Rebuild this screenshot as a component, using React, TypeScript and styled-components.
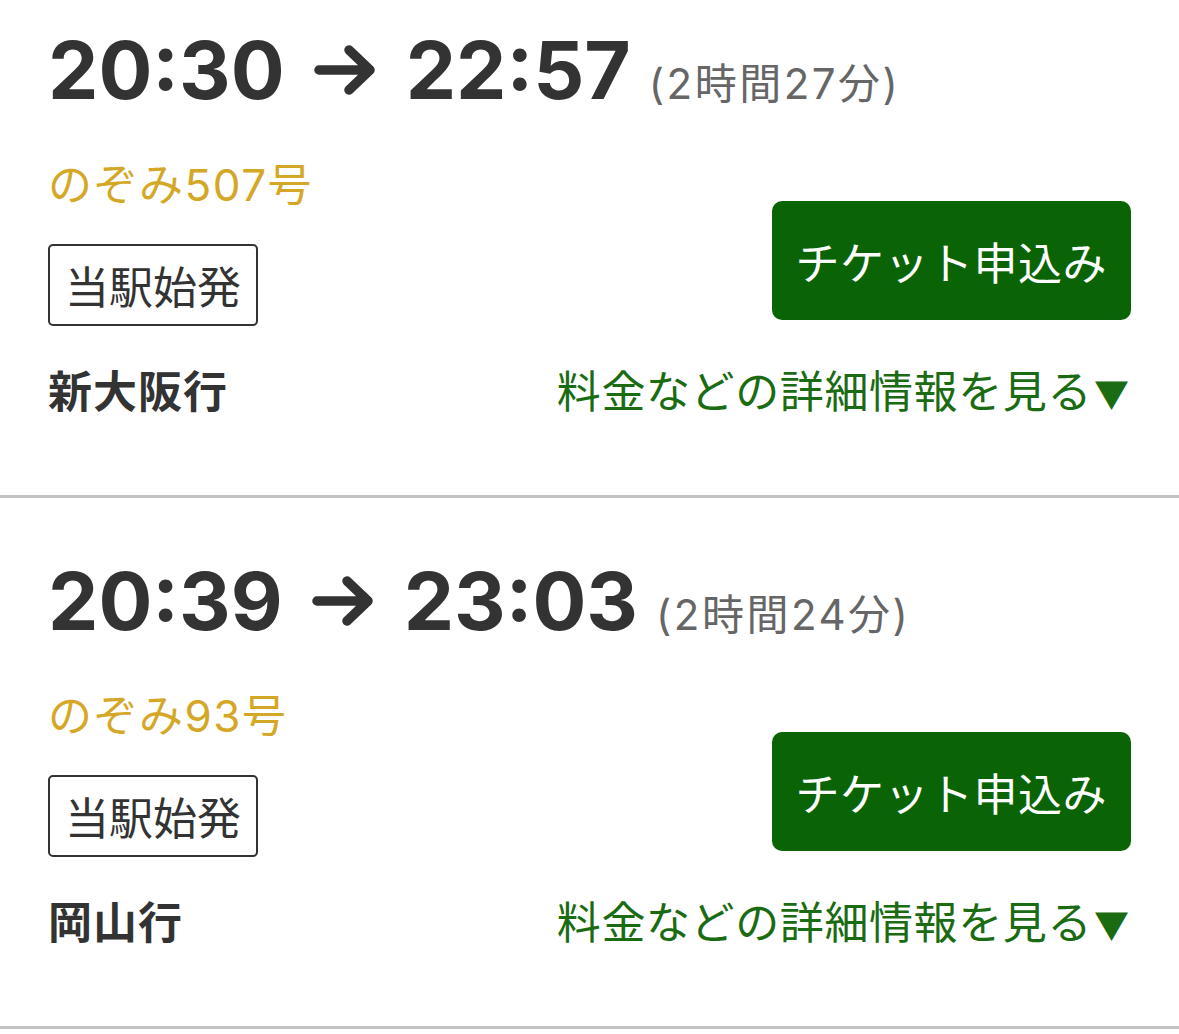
import React from "react";
import styled, { createGlobalStyle } from "styled-components";

const GlobalStyle = createGlobalStyle`
  html, body {
    margin: 0;
    padding: 0;
    background: #ffffff;
  }
  body {
    font-family: "Inter", "Noto Sans CJK JP", sans-serif;
    color: #333333;
  }
`;

const List = styled.div`
  width: 100%;
  margin-top: -33px;
`;

const Card = styled.section`
  padding: 63px 48px 76px;
  border-bottom: 3px solid #c2c2c2;
`;

const TimeRow = styled.div`
  white-space: nowrap;
  line-height: 80px;
  height: 80px;
`;

const Time = styled.span`
  font-family: "Inter", "Liberation Sans", sans-serif;
  font-weight: 700;
  font-size: 80px;
  color: #333333;
`;

const Arrow = styled.svg`
  width: 62px;
  height: 50px;
  margin: 0 30px 0 29px;
  vertical-align: 4px;
`;

const Duration = styled.span`
  font-family: "Inter", "Noto Sans CJK JP", sans-serif;
  font-size: 42px;
  letter-spacing: 2.5px;
  color: #666666;
  margin-left: 18px;
`;

const Body = styled.div`
  display: flex;
  justify-content: space-between;
  align-items: flex-end;
  margin-top: 45px;
`;

const LeftCol = styled.div`
  display: flex;
  flex-direction: column;
  align-items: flex-start;
`;

const TrainName = styled.div`
  font-family: "Inter", "Noto Sans CJK JP", sans-serif;
  font-size: 44px;
  letter-spacing: 1.5px;
  line-height: 60px;
  color: #d4a826;
`;

const Badge = styled.div`
  margin-top: 29px;
  border: 2px solid #333333;
  border-radius: 5px;
  padding: 0 15px;
  height: 78px;
  display: flex;
  align-items: center;
  font-family: "Noto Sans CJK JP", sans-serif;
  font-size: 44px;
  color: #333333;
`;

const TicketButton = styled.button`
  height: 119px;
  padding: 0 24px;
  margin-bottom: 6px;
  border: none;
  border-radius: 10px;
  background: #0a6406;
  color: #ffffff;
  font-family: "Noto Sans CJK JP", sans-serif;
  font-size: 44px;
  letter-spacing: 0.5px;
  cursor: pointer;
`;

const Footer = styled.div`
  display: flex;
  justify-content: space-between;
  align-items: center;
  margin-top: 33px;
  height: 60px;
  line-height: 60px;
`;

const Destination = styled.div`
  font-family: "Noto Sans CJK JP", sans-serif;
  font-weight: 700;
  font-size: 44px;
  letter-spacing: 1px;
  color: #333333;
`;

const DetailLink = styled.a`
  font-family: "Noto Sans CJK JP", sans-serif;
  font-size: 44px;
  letter-spacing: 0.6px;
  color: #1a6b12;
  text-decoration: none;
  margin-right: 2px;
`;

const Caret = styled.span`
  font-size: 35px;
  line-height: 0;
  letter-spacing: 0;
  margin-left: 2px;
`;

type Trip = {
  dep: string;
  arr: string;
  duration: string;
  train: string;
  dest: string;
};

const trips: Trip[] = [
  { dep: "20:30", arr: "22:57", duration: "(2時間27分)", train: "のぞみ507号", dest: "新大阪行" },
  { dep: "20:39", arr: "23:03", duration: "(2時間24分)", train: "のぞみ93号", dest: "岡山行" },
];

function TripCard({ trip }: { trip: Trip }) {
  return (
    <Card>
      <TimeRow>
        <Time>{trip.dep}</Time>
        <Arrow viewBox="0 0 62 50">
          <path
            d="M5 25 H55 M35 5 L56 25 L35 45"
            fill="none"
            stroke="#333333"
            strokeWidth="9.5"
            strokeLinecap="round"
            strokeLinejoin="round"
          />
        </Arrow>
        <Time>{trip.arr}</Time>
        <Duration>{trip.duration}</Duration>
      </TimeRow>

      <Body>
        <LeftCol>
          <TrainName>{trip.train}</TrainName>
          <Badge>当駅始発</Badge>
        </LeftCol>
        <TicketButton>チケット申込み</TicketButton>
      </Body>

      <Footer>
        <Destination>{trip.dest}</Destination>
        <DetailLink href="#">
          料金などの詳細情報を見る<Caret>▼</Caret>
        </DetailLink>
      </Footer>
    </Card>
  );
}

export default function App() {
  return (
    <>
      <GlobalStyle />
      <List>
        {trips.map((t) => (
          <TripCard key={t.dep} trip={t} />
        ))}
      </List>
    </>
  );
}
